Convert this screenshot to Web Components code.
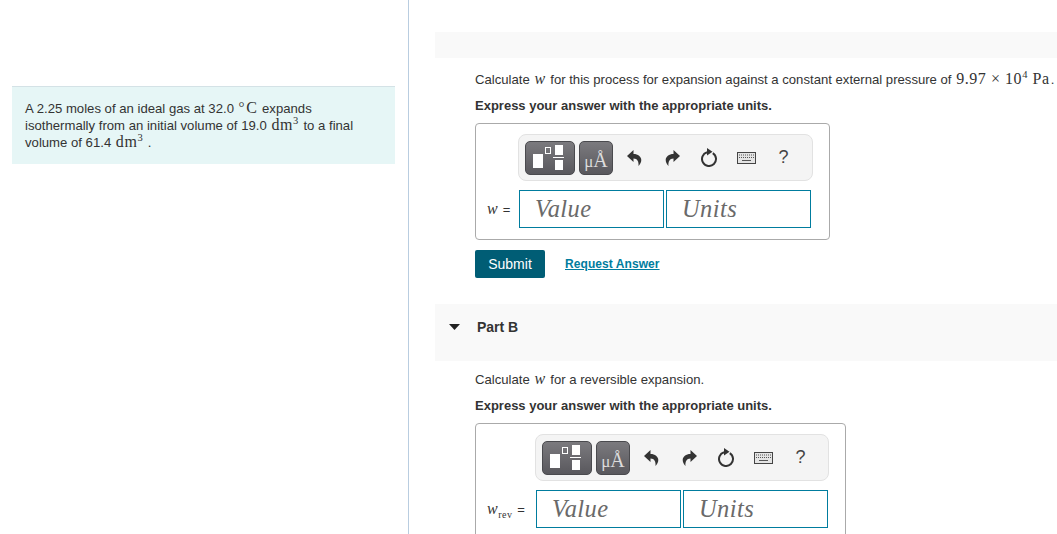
<!DOCTYPE html>
<html>
<head>
<meta charset="utf-8">
<title>Part B</title>
<style>
html, body { margin: 0; height: 534px; overflow: hidden; background: #fff; }
body { font-family: "Liberation Sans", Arial, sans-serif; font-size: 13px; color: #333; }
sup { font-size: 10.5px; line-height: 0; }
sub { font-size: 10px; line-height: 0; }
i { font-style: italic; }
.deg { font-size: 15px; margin-right: 1px; position: relative; top: -1px; }
</style>
</head>
<body>
<mp-page>
	<side-panel slot="side">A 2.25 moles of an ideal gas at 32.0 <tex-m><span class="deg">°</span>C</tex-m> expands isothermally from an initial volume of 19.0 <tex-m>dm<sup>3</sup></tex-m> to a final volume of 61.4 <tex-m>dm<sup>3</sup></tex-m> .</side-panel>

	<part-bar slim></part-bar>
	<part-body style="--body-top:13px">
		<p-line>Calculate <tex-m><i>w</i></tex-m> for this process for expansion against a constant external pressure of <tex-m>9.97 × 10<sup>4</sup> Pa</tex-m>.</p-line>
		<p-line strong>Express your answer with the appropriate units.</p-line>
		<answer-box style="--box-width:355px;--tool-width:295px"><tex-m><i>w</i></tex-m> =</answer-box>
		<submit-row></submit-row>
	</part-body>

	<part-bar open>Part B</part-bar>
	<part-body style="--body-top:10px">
		<p-line>Calculate <tex-m><i>w</i></tex-m> for a reversible expansion.</p-line>
		<p-line strong>Express your answer with the appropriate units.</p-line>
		<answer-box style="--box-width:371px;--tool-width:294px;--row-shift:1px"><tex-m><i>w</i><sub>rev</sub></tex-m> =</answer-box>
	</part-body>
</mp-page>

<script>
const templatePage = document.createElement('template');
templatePage.innerHTML = `
	<style>
		:host { display: flex; align-items: stretch; height: 534px; overflow: hidden; }
		.left { box-sizing: border-box; width: 409px; flex: none; border-right: 1px solid #b9cde0; padding: 86px 13px 0 12px; }
		.right { flex: 1; min-width: 0; padding: 32px 0 0 26px; }
	</style>
	<div class="left"><slot name="side"></slot></div>
	<div class="right"><slot></slot></div>
`;
class MpPage extends HTMLElement {
	constructor() {
		super();
		this.attachShadow({ mode: 'open' });
		this.shadowRoot.appendChild(templatePage.content.cloneNode(true));
	}
}
customElements.define('mp-page', MpPage);

class TexM extends HTMLElement {
	constructor() {
		super();
		this.attachShadow({ mode: 'open' }).innerHTML = `
			<style>
				:host { display: inline; margin: 0 1px; font-family: "Liberation Serif", "Times New Roman", serif; font-size: 16px; letter-spacing: .55px; line-height: 0; }
			</style>
			<slot></slot>`;
	}
}
customElements.define('tex-m', TexM);

class SidePanel extends HTMLElement {
	constructor() {
		super();
		this.attachShadow({ mode: 'open' }).innerHTML = `
			<style>
				:host { display: block; box-sizing: border-box; height: 78px; padding: 13px 30px 0 13px; background: #e6f6f6; border-top: 1px solid #d4e2e6; font-size: 13.15px; line-height: 17px; color: #333; }
			</style>
			<slot></slot>`;
	}
}
customElements.define('side-panel', SidePanel);

class PartBar extends HTMLElement {
	constructor() {
		super();
		const arrow = this.hasAttribute('open')
			? `<svg width="11" height="6" viewBox="0 0 11 6"><path d="M0 0h11L5.500 6z" fill="#222"/></svg>`
			: '';
		this.attachShadow({ mode: 'open' }).innerHTML = `
			<style>
				:host { display: flex; align-items: flex-start; gap: 17px; box-sizing: border-box; height: 57px; padding: 15px 0 0 14px; background: #f9f9f9; font-size: 14px; line-height: 17px; font-weight: bold; color: #333; }
				:host([slim]) { height: 26px; padding: 0; }
				svg { margin-top: 5px; }
			</style>
			${arrow}<slot></slot>`;
	}
}
customElements.define('part-bar', PartBar);

class PartBody extends HTMLElement {
	constructor() {
		super();
		this.attachShadow({ mode: 'open' }).innerHTML = `
			<style>
				:host { display: block; padding: var(--body-top) 0 26px 40px; }
			</style>
			<slot></slot>`;
	}
}
customElements.define('part-body', PartBody);

class PLine extends HTMLElement {
	constructor() {
		super();
		this.attachShadow({ mode: 'open' }).innerHTML = `
			<style>
				:host { display: block; height: 26px; line-height: 18px; font-size: 13.13px; white-space: nowrap; }
				:host([strong]) { font-weight: bold; font-size: 13px; }
			</style>
			<slot></slot>`;
	}
}
customElements.define('p-line', PLine);

const templateToolbar = document.createElement('template');
templateToolbar.innerHTML = `
	<style>
		:host { display: flex; align-items: center; box-sizing: border-box; width: var(--tool-width); height: 47px; padding-left: 6px; background: #f4f4f4; border: 1px solid #e2e2e2; border-radius: 8px; }
		.btn { box-sizing: border-box; display: flex; height: 34px; border: 1px solid #4a4a4e; border-radius: 5px; background: linear-gradient(#7b7a7e, #59585d); }
		.frac { width: 50px; margin-right: 4px; }
		.unit { width: 34px; align-items: baseline; justify-content: center; font-family: "Liberation Serif", serif; color: #dcdcdc; padding-top: 6px; line-height: 24px; }
		.unit .mu { font-size: 17px; }
		.unit .ang { font-size: 20px; }
		.tool { flex: none; display: flex; justify-content: center; align-items: center; width: 37px; height: 34px; color: #444; font-size: 18px; }
		.undo { width: 38px; margin-left: 2px; }
		.redo { width: 38px; }
	</style>
	<div class="btn frac">
		<svg width="48" height="32" viewBox="0 0 48 32">
			<rect x="7" y="12" width="10" height="14" fill="#fff"/>
			<rect x="19.500" y="5.500" width="5" height="6" fill="none" stroke="#fff"/>
			<rect x="29" y="3" width="8" height="10" fill="#fff"/>
			<rect x="27" y="15" width="11" height="1" fill="#fff"/>
			<rect x="29" y="18" width="8" height="10" fill="#fff"/>
		</svg>
	</div>
	<div class="btn unit"><span class="mu">μ</span><span class="ang">Å</span></div>
	<div class="tool undo">
		<svg width="15" height="16" viewBox="0 0 15 16"><path d="M6.500 0L0 6l6.500 6V8.500c4 0 5.500 3.500 5 7.500 1.500-1.700 2.800-3.700 2.800-6C14.300 6.700 11 4 6.500 4z" fill="#333"/></svg>
	</div>
	<div class="tool redo">
		<svg width="15" height="16" viewBox="0 0 15 16"><path d="M8.500 0L15 6l-6.500 6V8.500c-4 0-5.500 3.500-5 7.500C2 14.300.7 12.300.7 10 .7 6.700 4 4 8.500 4z" fill="#333"/></svg>
	</div>
	<div class="tool">
		<svg width="18" height="19" viewBox="1 0 18 19"><path d="M12.800 5.100A7 7 0 1 1 7 4.300" fill="none" stroke="#333" stroke-width="2"/><path d="M7 0l5.500 3.800L7 7.500z" fill="#333"/></svg>
	</div>
	<div class="tool">
		<svg width="19" height="12" viewBox="0 0 19 12"><rect x=".5" y=".5" width="18" height="11" fill="#e4e4e4" stroke="#444"/><path d="M2 3h15M2 5.500h15" stroke="#555" stroke-dasharray="1 1"/><path d="M5 8.500h9" stroke="#555"/></svg>
	</div>
	<div class="tool">?</div>
`;
class MathToolbar extends HTMLElement {
	constructor() {
		super();
		this.attachShadow({ mode: 'open' });
		this.shadowRoot.appendChild(templateToolbar.content.cloneNode(true));
	}
}
customElements.define('math-toolbar', MathToolbar);

const templateAnswer = document.createElement('template');
templateAnswer.innerHTML = `
	<style>
		:host { display: block; box-sizing: border-box; width: var(--box-width); height: 117px; margin-bottom: 10px; padding: 10px 16px 0 11px; border: 1px solid #aaa; border-radius: 4px; }
		.tools { display: flex; justify-content: flex-end; }
		.row { display: flex; align-items: center; gap: 2px; margin-top: 9px; margin-right: calc(2px - var(--row-shift, 0px)); }
		.label { flex: 1; margin-left: -1px; text-align: left; font-size: 13px; white-space: nowrap; }
		.field { box-sizing: border-box; display: flex; align-items: center; width: 145px; height: 38px; padding-left: 15px; border: 1px solid #007c9e; font: italic 24.5px "Liberation Serif", serif; color: #6a6a6a; letter-spacing: .4px; }
	</style>
	<div class="tools"><math-toolbar></math-toolbar></div>
	<div class="row">
		<div class="label"><slot></slot></div>
		<div class="field">Value</div>
		<div class="field">Units</div>
	</div>
`;
class AnswerBox extends HTMLElement {
	constructor() {
		super();
		this.attachShadow({ mode: 'open' });
		this.shadowRoot.appendChild(templateAnswer.content.cloneNode(true));
	}
}
customElements.define('answer-box', AnswerBox);

class SubmitRow extends HTMLElement {
	constructor() {
		super();
		this.attachShadow({ mode: 'open' }).innerHTML = `
			<style>
				:host { display: flex; align-items: center; gap: 20px; height: 28px; }
				.submit { box-sizing: border-box; display: flex; align-items: center; justify-content: center; width: 70px; height: 28px; background: #005d75; border-radius: 2px; color: #fff; font-size: 14px; }
				a { color: #007c9e; font-size: 12px; font-weight: bold; letter-spacing: .07px; text-decoration: underline; }
			</style>
			<div class="submit">Submit</div>
			<a href="#">Request Answer</a>`;
	}
}
customElements.define('submit-row', SubmitRow);
</script>
</body>
</html>
